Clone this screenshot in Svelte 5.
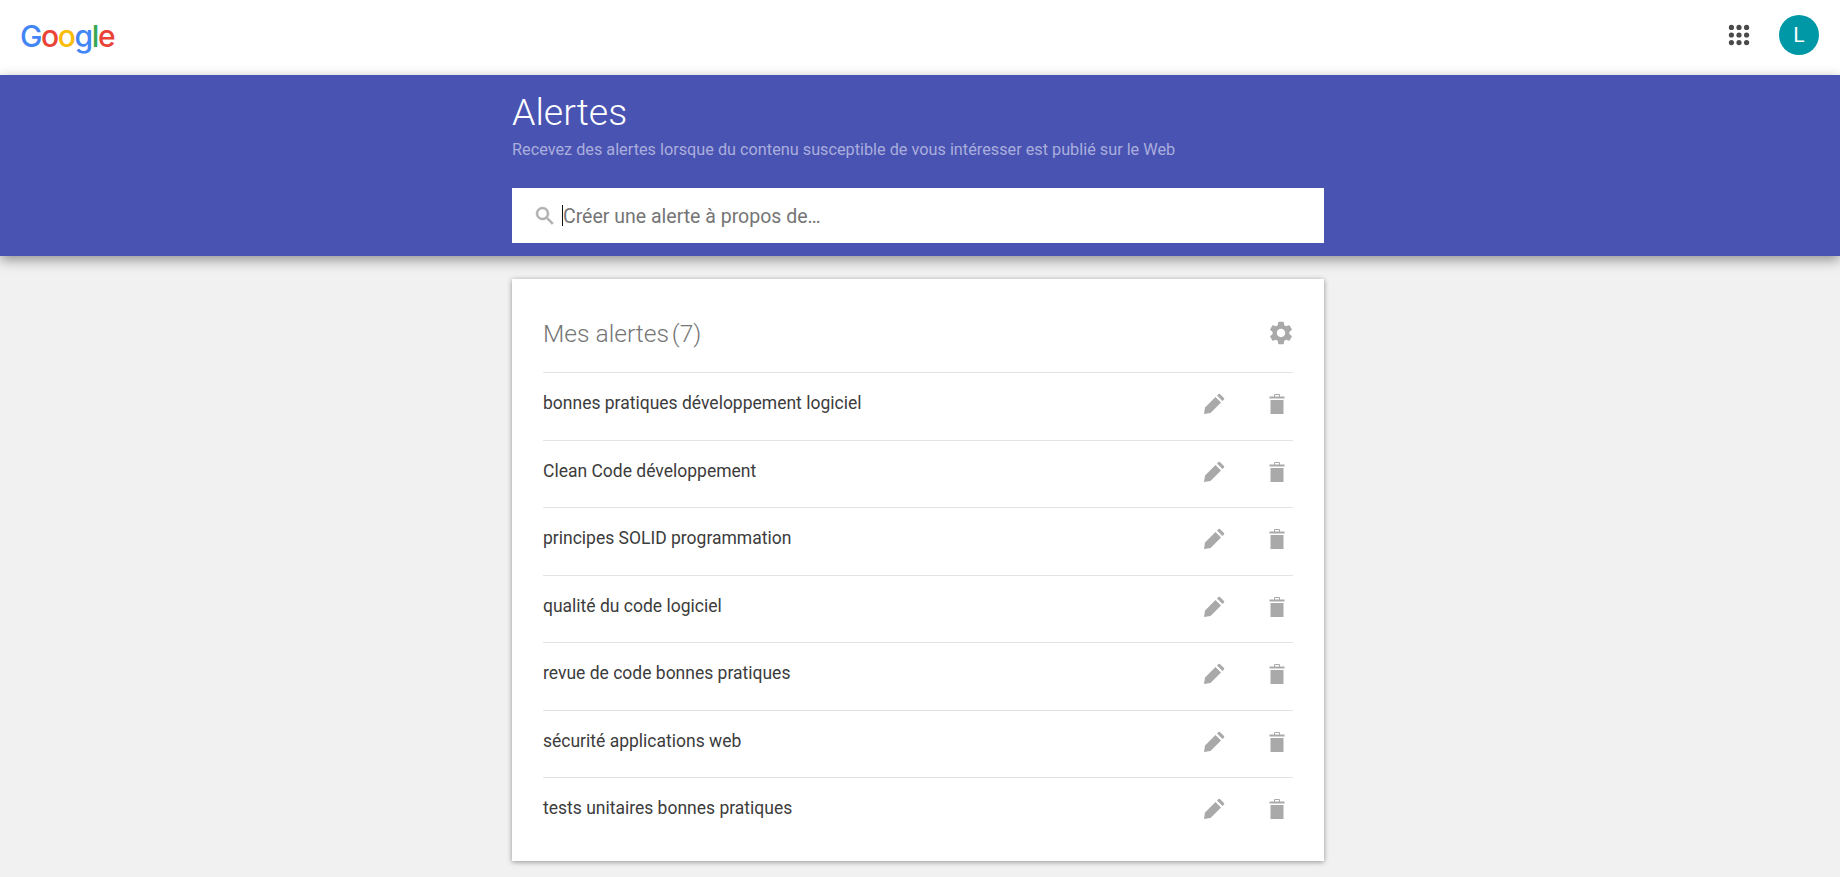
<script>
	const alerts = [
		'bonnes pratiques développement logiciel',
		'Clean Code développement',
		'principes SOLID programmation',
		'qualité du code logiciel',
		'revue de code bonnes pratiques',
		'sécurité applications web',
		'tests unitaires bonnes pratiques'
	];
	const dots = [5, 12, 19];
</script>

<div class="page">
	<header class="topbar">
		<div class="logo">
			<span class="blue">G</span><span class="red">o</span><span class="yellow">o</span><span class="blue">g</span><span class="green">l</span><span class="red">e</span>
		</div>
		<div class="account">
			<svg class="apps" width="26" height="26" viewBox="0 0 24 24">
				{#each dots as y}
					{#each dots as x}
						<circle cx={x} cy={y} r="2.4" fill="#4a4a4a" />
					{/each}
				{/each}
			</svg>
			<div class="avatar">L</div>
		</div>
	</header>

	<section class="banner">
		<div class="column">
			<h1>Alertes</h1>
			<p class="tagline">Recevez des alertes lorsque du contenu susceptible de vous intéresser est publié sur le Web</p>
			<div class="search">
				<svg width="24" height="24" viewBox="0 0 24 24" fill="#b0b0b0" stroke="#b0b0b0" stroke-width="0.5">
					<path d="M15.5 14h-.79l-.28-.27A6.47 6.47 0 0 0 16 9.5 6.5 6.500 0 1 0 9.5 16c1.61 0 3.09-.59 4.23-1.57l.27.28v.79l5 4.99L20.49 19l-4.99-5zm-6 0C7.01 14 5 11.99 5 9.5S7.01 5 9.5 5 14 7.01 14 9.500 11.99 14 9.5 14z" />
				</svg>
				<span class="caret"></span>
				<span class="placeholder">Créer une alerte à propos de…</span>
			</div>
		</div>
	</section>

	<main class="column">
		<div class="card">
			<div class="card-head">
				<h2>Mes alertes <span>(7)</span></h2>
				<svg class="gear" width="28" height="28" viewBox="0 0 24 24" fill="#a9a9a9">
					<path d="M19.14 12.94c.04-.3.06-.61.06-.94 0-.32-.02-.64-.07-.94l2.03-1.58a.49.49 0 0 0 .12-.61l-1.92-3.32a.488.488 0 0 0-.59-.22l-2.39.96c-.5-.38-1.03-.7-1.62-.94l-.36-2.54a.484.484 0 0 0-.48-.41h-3.84c-.24 0-.43.17-.47.41l-.36 2.54c-.59.24-1.13.57-1.62.94l-2.39-.96c-.22-.08-.47 0-.59.22L2.74 8.87c-.12.21-.08.47.12.61l2.03 1.58c-.05.3-.09.63-.09.94s.02.64.07.94l-2.03 1.58a.49.49 0 0 0-.12.61l1.92 3.32c.12.22.37.29.59.22l2.39-.96c.5.38 1.03.7 1.62.94l.36 2.54c.05.24.24.41.48.41h3.84c.24 0 .44-.17.47-.41l.36-2.54c.59-.24 1.13-.56 1.62-.94l2.39.96c.22.08.47 0 .59-.22l1.92-3.32c.12-.22.07-.47-.12-.61l-2.01-1.58zM12 15.6c-1.98 0-3.6-1.62-3.6-3.6s1.62-3.6 3.6-3.6 3.6 1.62 3.6 3.6-1.62 3.6-3.6 3.6z" />
				</svg>
			</div>
			<ul>
				{#each alerts as alert}
					<li>
						<span class="query">{alert}</span>
						<svg class="edit" width="24" height="24" viewBox="0 0 24 24" fill="#a9a9a9">
							<path d="M2 22l1-6.500L13.500 5l5.500 5.500L8.500 21zM15 3.500l1.500-1.500a1 1 0 0 1 1.400 0l4.100 4.100a1 1 0 0 1 0 1.400L20.500 9z" />
						</svg>
						<svg class="trash" width="24" height="24" viewBox="0 0 24 24" fill="#a9a9a9">
							<path d="M5.500 8h13v14h-13zM4.500 4.500H9V3q0-1 1-1h4q1 0 1 1v1.500h4.500v2h-15zM10 4.500h4V3h-4z" fill-rule="evenodd" />
						</svg>
					</li>
				{/each}
			</ul>
		</div>
	</main>
</div>

<style>
	:global(body) {
		margin: 0;
		background: #f1f1f1;
		font-family: Roboto, 'Liberation Sans', sans-serif;
	}

	.page {
		height: 877px;
		overflow: hidden;
	}

	.topbar {
		height: 75px;
		box-sizing: border-box;
		background: #fff;
		display: flex;
		align-items: center;
		justify-content: space-between;
		padding: 0 21px 5px 20px;
	}

	.logo {
		font-family: Inter, sans-serif;
		font-size: 30px;
		font-weight: 500;
		letter-spacing: -1.4px;
		line-height: 1;
		margin-top: 2px;
	}

	.blue { color: #4285f4; }
	.red { color: #ea4335; }
	.yellow { color: #fbbc05; }
	.green { color: #34a853; }

	.account {
		display: flex;
		align-items: center;
		gap: 27px;
	}

	.avatar {
		width: 40px;
		height: 40px;
		border-radius: 50%;
		background: #0097a7;
		color: #fff;
		font-size: 21px;
		display: flex;
		align-items: center;
		justify-content: center;
	}

	.banner {
		height: 181px;
		background: #4953b2;
		box-shadow: 0 4px 12px rgba(0, 0, 0, 0.4);
		position: relative;
	}

	.column {
		width: 812px;
		margin-left: 512px;
	}

	h1 {
		margin: 0;
		padding-top: 15px;
		font-size: 37.5px;
		line-height: 44px;
		font-weight: 300;
		color: #fff;
	}

	.tagline {
		margin: 6px 0 0;
		font-size: 16.25px;
		line-height: 20px;
		color: #a9aedd;
	}

	.search {
		margin-top: 28px;
		height: 55px;
		background: #fff;
		display: flex;
		align-items: center;
		padding-left: 21px;
	}

	.caret {
		width: 1px;
		height: 21px;
		background: #111;
		margin-left: 5px;
	}

	.placeholder {
		font-size: 19.5px;
		color: #757575;
		padding-top: 1px;
	}

	.card {
		margin-top: 23px;
		height: 582px;
		box-sizing: border-box;
		background: #fff;
		padding: 0 31px;
		box-shadow: 0 1px 5px rgba(0, 0, 0, 0.4);
	}

	.card-head {
		height: 93px;
		display: flex;
		align-items: center;
		justify-content: space-between;
		padding-top: 15px;
		box-sizing: border-box;
	}

	.gear {
		margin-right: -2px;
	}

	h2 {
		margin: 0;
		font-size: 24.6px;
		font-weight: 300;
		color: #757575;
	}

	h2 span {
		margin-left: -3px;
	}

	ul {
		list-style: none;
		margin: 0;
		padding: 0;
	}

	li {
		height: 67.5px;
		box-sizing: border-box;
		border-top: 1px solid #e3e3e3;
		display: flex;
		align-items: center;
		font-size: 17.5px;
		color: #3c3c3c;
		padding-bottom: 4px;
	}

	.query {
		flex: 1;
		margin-bottom: 2px;
	}

	.trash {
		margin-left: 39px;
		margin-right: 4px;
	}
</style>
